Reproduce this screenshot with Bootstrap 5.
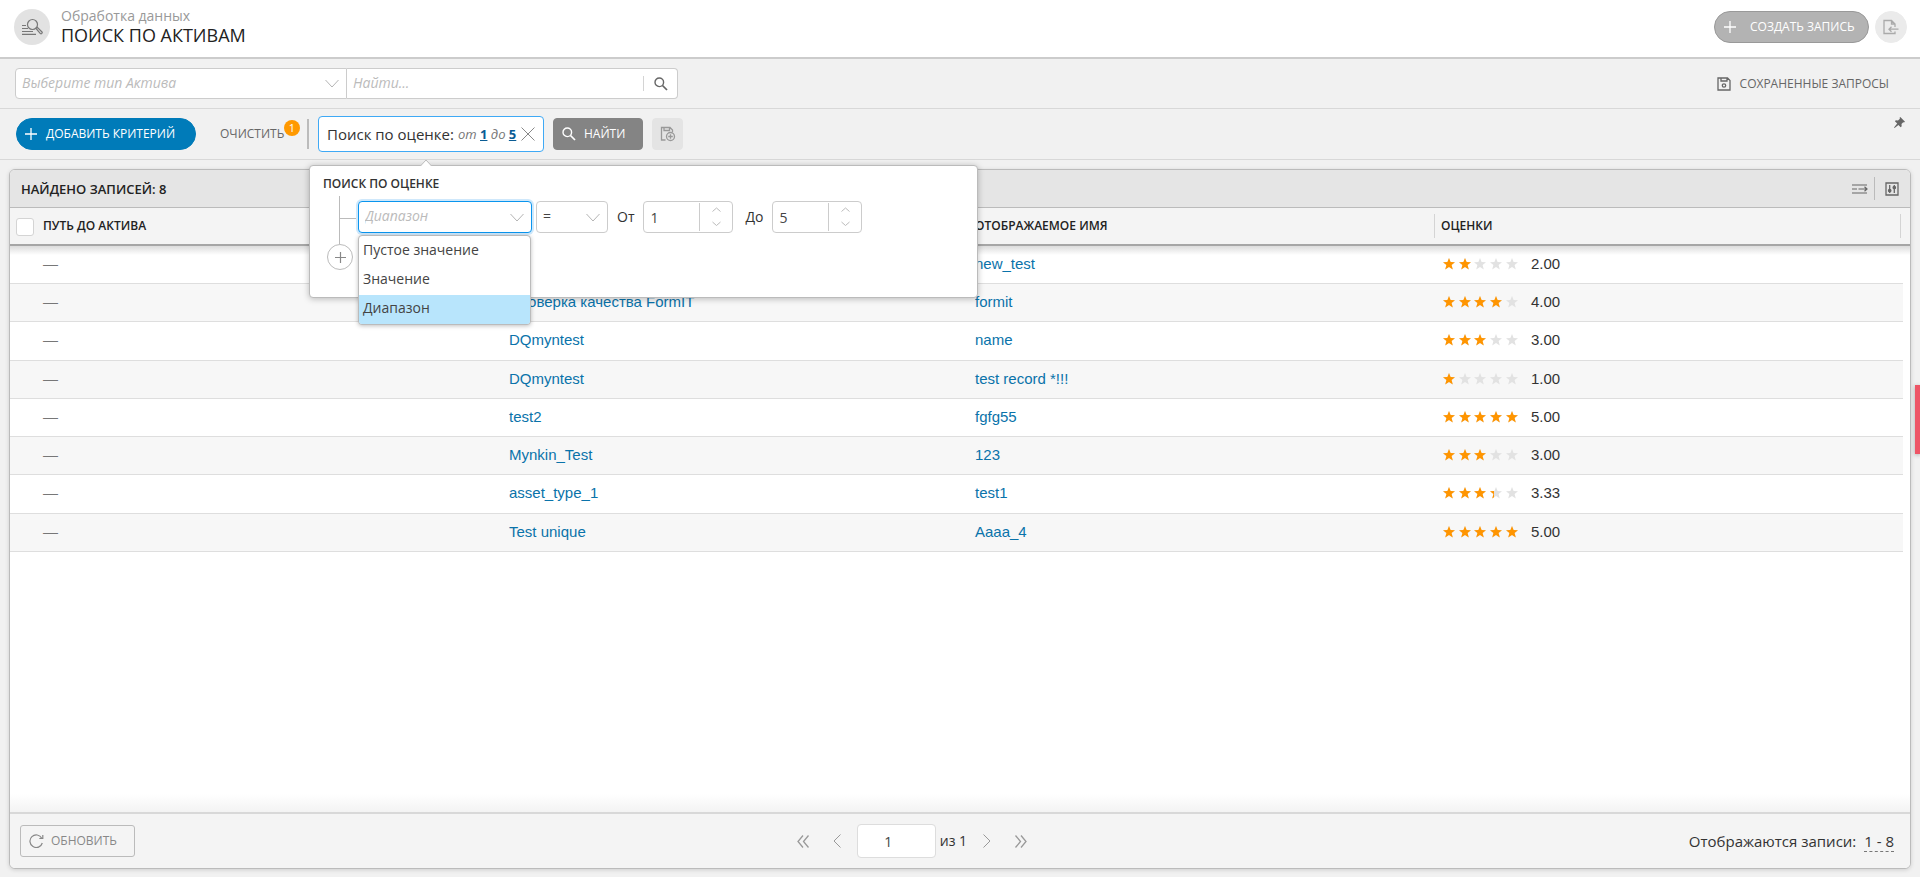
<!DOCTYPE html>
<html lang="ru">
<head>
<meta charset="utf-8">
<meta name="viewport" content="width=device-width, initial-scale=1">
<title>Поиск по активам</title>
<link href="https://cdn.jsdelivr.net/npm/bootstrap@5.3.0/dist/css/bootstrap.min.css" rel="stylesheet">
<style>
  body { font-family: "Open Sans", "Noto Sans", sans-serif; font-size: 14px; line-height: 20px; background: #f1f1f1; color: #333; }
  svg { display: block; flex: none; }
  .ico { fill: none; stroke: currentColor; }
  .btn { --bs-btn-font-size: 12px; --bs-btn-line-height: 20px; --bs-btn-padding-y: 5px; display: inline-flex; align-items: center; white-space: nowrap; }
  .form-control, .form-select { font-size: 14px; line-height: 20px; border-color: #ccc; border-radius: 4px; color: #444; min-height: 0; }
  .form-control::placeholder { color: #bbb; font-style: italic; }
  .form-select { --bs-form-select-bg-img: url("data:image/svg+xml,%3csvg xmlns='http://www.w3.org/2000/svg' viewBox='0 0 14 9'%3e%3cpath fill='none' stroke='%23b4b4b4' d='M.5 1 7 8l6.5-7'/%3e%3c/svg%3e"); background-size: 14px 9px; background-position: right 7px center; }
  .form-select.hint { color: #bbb; font-style: italic; }

  .page-head { background: #fff; border-bottom: 2px solid #ccc; height: 59px; padding: 0 13px 0 14px; }
  .page-icon { width: 36px; height: 36px; background: #e2e2e2; color: #777; margin-bottom: 3px; }
  .page-names { margin-left: 11px; padding-bottom: 5px; }
  .page-sub { color: #999; font-size: 14px; line-height: 18px; }
  .page-title { color: #222; font-size: 18px; line-height: 21px; font-weight: 500; }
  .page-acts { gap: 6px; }
  .btn-create { --bs-btn-bg: #b3b3b3; --bs-btn-border-color: #999; --bs-btn-color: #fff; --bs-btn-hover-bg: #a5a5a5; --bs-btn-hover-color: #fff; padding-left: 9px; padding-right: 0; gap: 14px; width: 155px; font-weight: 500; }
  .btn-round { width: 32px; height: 32px; padding: 0; justify-content: center; --bs-btn-bg: #ebebeb; --bs-btn-border-color: #ebebeb; --bs-btn-color: #aaa; }

  .bar-row { border-bottom: 1px solid #d8d8d8; padding: 0 15px; }
  .bar-search { height: 50px; }
  .bar-criteria { height: 51px; }
  .search-box { width: 663px; }
  .search-box .form-select { width: 332px; height: 31px; padding: 4px 28px 6px 6px; border-radius: 4px 0 0 4px; }
  .find-box { background: #fff; border: 1px solid #ccc; border-left: 0; border-radius: 0 4px 4px 0; height: 31px; }
  .find-box .form-control { border: 0; padding: 3px 6px 5px; background: none; }
  .find-box .btn { border: 0; border-left: 1px solid #d4d4d4; border-radius: 0; height: 15px; padding: 0 11px 0 10px; color: #666; width: 34px; }
  .saved { color: #666; font-size: 12px; text-decoration: none; gap: 9px; padding-right: 16px; }

  .btn-add { --bs-btn-bg: #007bb9; --bs-btn-border-color: #007bb9; --bs-btn-color: #fff; --bs-btn-hover-bg: #006da4; --bs-btn-hover-color: #fff; padding-left: 8px; padding-right: 0; gap: 9px; margin-left: 1px; width: 180px; font-weight: 500; }
  .btn-clear { color: #666; padding: 0; border: 0; margin-left: 24px; width: 66px; }
  .count { width: 16px; height: 16px; background: #f90; color: #fff; font-size: 11px; line-height: 16px; left: 64px; top: -4px; }
  .split { width: 2px; height: 30px; background: #bbb; margin: 0 9px 0 21px; }
  .chip { background: #fff; border: 1px solid #3fa9f5; border-radius: 4px; height: 36px; width: 226px; padding: 0 8px; font-size: 15px; white-space: nowrap; }
  .chip-val { color: #777; font-size: 13px; font-style: italic; margin-left: 4px; }
  .chip-val a { color: #0a5c94; font-style: normal; font-weight: 700; }
  .chip .btn { color: #888; }
  .btn-find { --bs-btn-bg: #848484; --bs-btn-border-color: #848484; --bs-btn-color: #fff; --bs-btn-hover-bg: #777; --bs-btn-hover-color: #fff; --bs-btn-border-radius: 4px; padding-left: 8px; padding-right: 0; gap: 8px; margin-left: 9px; width: 90px; font-weight: 500; }
  .btn-save { --bs-btn-bg: #e4e4e4; --bs-btn-border-color: #e4e4e4; --bs-btn-color: #999; --bs-btn-border-radius: 4px; width: 31px; height: 32px; padding: 0; justify-content: center; margin-left: 9px; }
  .btn-pin { border: 0; padding: 0; color: #666; margin: 8px 0 0; align-self: flex-start; }

  .pop { left: -9px; top: 49px; width: 669px; height: 133px; background: #fff; border: 1px solid #bbb; border-radius: 4px; box-shadow: 0 1px 6px rgba(0,0,0,.25); z-index: 5; padding: 8px 13px; }
  .pop-arrow { left: 110px; top: -7px; }
  .pop-title { font-size: 12px; line-height: 20px; color: #333; font-weight: 600; }
  .tree { width: 35px; padding: 2px 0 0 4px; }
  .tree-stem { width: 20px; height: 48px; margin-left: 12px; border-left: 1px solid #bbb; background: linear-gradient(#bbb, #bbb) 0 22px / 100% 1px no-repeat; }
  .btn-plus { width: 26px; height: 26px; padding: 0; justify-content: center; border: 1px solid #bbb; color: #888; }
  .cond { gap: 4px; margin-top: 7px; height: 32px; }
  .cond label { margin: 0 5px; }
  .cond .spin + label { margin-left: 8px; }
  .cond .form-select, .spin { height: 32px; }
  .cond .form-select { padding: 4px 28px 6px 6px; }
  .cond .sel-kind { width: 174px; border-color: #0a95ee; box-shadow: 0 0 0 2px #cfe8fb; }
  .cond .sel-op { width: 72px; }
  .spin { width: 90px; border: 1px solid #ccc; border-radius: 4px; background: #fff; padding: 1px 0; }
  .spin .form-control { border: 0; border-right: 1px solid #ccc; border-radius: 0; padding: 3px 6px; width: 56px; height: 28px; appearance: textfield; background: none; }
  .spin .form-control::-webkit-inner-spin-button { appearance: none; }
  .spin .btn { border: 0; padding: 4px 12px; color: #bbb; }
  .kinds { left: 48px; top: 69px; width: 173px; min-width: 0; padding: 1px 0 0; border: 1px solid #bbb; border-radius: 4px; box-shadow: 0 1px 4px rgba(0,0,0,.25); margin: 0; overflow: hidden; }
  .kinds .dropdown-item { font-size: 14px; line-height: 21px; padding: 2px 4px 6px; color: #444; }
  .kinds .dropdown-item.active { background: #b8e5fc; }

  .grid { margin: 9px 9px 8px; border: 1px solid #bbb; border-radius: 6px; background: #fff; box-shadow: 0 1px 4px rgba(0,0,0,.15); overflow: hidden; }
  .strong-caps { font-family: "Open Sans", sans-serif; font-weight: 600; font-size: 12px; color: #222; }
  .found { font-size: 13px; }
  .grid-head { background: #e5e5e5; border-bottom: 1px solid #bbb; height: 38px; padding: 0 11px; }
  .grid-head .btn { border: 0; padding: 0; color: #666; }
  .grid-tools { gap: 6px; }
  .grid-tools .bar { width: 1px; height: 23px; background: #bbb; margin-right: 4px; }
  .assets { table-layout: fixed; width: 100%; border-collapse: separate; border-spacing: 0; font-family: "Liberation Sans", Arial, sans-serif; font-size: 15px; line-height: 20px; }
  .assets col.c-check { width: 26px; } .assets col.c-edge { width: 3px; } .assets col.c-bar { width: 7px; }
  .assets th { height: 38px; background: #f4f4f4; border-bottom: 2px solid #a6a6a6; padding: 0 7px; }
  .assets th.sep { background: linear-gradient(#d4d4d4, #d4d4d4) 0 6px / 1px 24px no-repeat #f4f4f4; }
  .assets th.check { padding: 2px 0 0 6px; }
  .assets .form-check-input { width: 18px; height: 18px; margin: 0; border-color: #d4d4d4; border-radius: 3px; display: block; }
  .assets td { height: 38px; padding: 0 7px 2px; border-bottom: 1px solid #dedede; }
  .assets td:nth-child(2) { color: #777; }
  .assets tr:nth-child(4n+3) td { height: 39px; }
  .assets tr:nth-child(even) td { background: #f7f7f7; }
  .assets td:last-child { border: 0; background: none !important; }
  .assets tbody tr:first-child td { background: linear-gradient(#dcdcdc, #fff 9px) !important; }
  .assets a { color: #0a73aa; text-decoration: none; }
  .rate { gap: 10px; }
  .body-fade { height: 18px; background: linear-gradient(#fff, #f3f3f3); }
  .grid-foot { background: #f4f4f4; border-top: 2px solid #d8d8d8; height: 56px; padding: 0 16px 0 10px; }
  .btn-reload { --bs-btn-border-color: #bbb; --bs-btn-color: #888; --bs-btn-border-radius: 3px; padding-left: 8px; padding-right: 0; gap: 7px; width: 115px; }
  .pager .btn { border: 0; padding: 0; color: #999; }
  .pager .form-control { width: 79px; height: 34px; text-align: center; border-color: #ddd; padding: 6px 22px 6px 6px; }
  .shown { font-size: 15px; }
  .range { border-bottom: 1px dashed #777; margin-left: 4px; display: inline-block; }
  .edge-tab { right: 0; top: 385px; width: 5px; height: 69px; background: #ee5566; box-shadow: 0 1px 4px rgba(0,0,0,.3); border: 0; padding: 0; }
</style>
</head>
<body>
<svg width="0" height="0" class="position-absolute" aria-hidden="true">
  <symbol id="star" viewBox="0 0 12 12"><path fill="currentColor" d="M6 0 7.600 4.100 12 4.300 8.600 7 9.800 11.500 6 9 2.200 11.500 3.400 7 0 4.300 4.400 4.100Z"/></symbol>
  <g id="stars"><use href="#star" x="2" width="12" height="12"/><use href="#star" x="18" width="12" height="12"/><use href="#star" x="33" width="12" height="12"/><use href="#star" x="49" width="12" height="12"/><use href="#star" x="65" width="12" height="12"/></g>
  <symbol id="lens" viewBox="0 0 14 14"><g fill="none" stroke="currentColor"><circle cx="5.300" cy="5.300" r="4.300" stroke-width="1.400"/><path stroke-width="1.700" d="M8.500 8.500 13 13"/></g></symbol>
  <symbol id="plus" viewBox="0 0 12 12"><path fill="none" stroke="currentColor" stroke-width="1.300" d="M6 0v12M0 6h12"/></symbol>
</svg>

<div class="d-flex flex-column min-vh-100">
  <header class="page-head d-flex align-items-center">
    <span class="page-icon rounded-circle d-flex align-items-center justify-content-center">
      <svg class="ico" width="22" height="18" viewBox="0 0 22 18" stroke-width="1.200"><circle cx="11.500" cy="6.500" r="5"/><path d="M15 10.500l1.300-1.200 4.700 4.700c.8.900-.7 2.400-1.600 1.600ZM1 7.500h4M1 10.500h6M1 13.500h11M1 16.300h14"/></svg>
    </span>
    <div class="page-names flex-grow-1">
      <div class="page-sub">Обработка данных</div>
      <h1 class="page-title m-0">ПОИСК ПО АКТИВАМ</h1>
    </div>
    <div class="page-acts d-flex pb-1">
      <button type="button" class="btn btn-create rounded-pill"><svg width="12" height="12"><use href="#plus"/></svg>СОЗДАТЬ ЗАПИСЬ</button>
      <button type="button" class="btn btn-round rounded-circle" aria-label="Экспорт">
        <svg class="ico" width="16" height="16" viewBox="0 0 16 16" stroke-width="1.300"><path d="M12 12.500v2H1V1.500h7.500L12 5v3M8.500 1.500V5H12M15.500 10.200H6M8.500 7.700 6 10.200l2.500 2.500"/></svg>
      </button>
    </div>
  </header>

  <div class="bar-row bar-search d-flex align-items-center justify-content-between">
    <form class="search-box d-flex">
      <select class="form-select hint flex-shrink-0" aria-label="Тип Актива"><option>Выберите тип Актива</option></select>
      <div class="find-box d-flex align-items-center flex-grow-1">
        <input type="text" class="form-control" placeholder="Найти..." aria-label="Найти">
        <button type="button" class="btn" aria-label="Искать"><svg width="14" height="14"><use href="#lens"/></svg></button>
      </div>
    </form>
    <a href="#" class="saved d-flex align-items-center">
      <svg class="ico" width="14" height="14" viewBox="0 0 14 14" stroke-width="1.300"><path d="M1 1h9.500L13 3.500V13H1ZM4 1v3h6V1"/><circle cx="7" cy="8.500" r="1.700"/></svg>СОХРАНЕННЫЕ ЗАПРОСЫ
    </a>
  </div>

  <div class="bar-row bar-criteria d-flex align-items-center">
    <button type="button" class="btn btn-add rounded-pill"><svg width="12" height="12"><use href="#plus"/></svg>ДОБАВИТЬ КРИТЕРИЙ</button>
    <button type="button" class="btn btn-clear position-relative">ОЧИСТИТЬ<span class="count rounded-circle position-absolute text-center">1</span></button>
    <span class="split"></span>
    <div class="position-relative">
      <div class="chip d-flex align-items-center">
        <span>Поиск по оценке:</span>
        <span class="chip-val flex-grow-1">от <a href="#">1</a> до <a href="#">5</a></span>
        <button type="button" class="btn border-0 p-0" aria-label="Удалить критерий"><svg class="ico" width="14" height="14" viewBox="0 0 14 14"><path d="M.5.5l13 13M13.500.5l-13 13"/></svg></button>
      </div>
      <div class="pop position-absolute">
        <svg class="pop-arrow position-absolute" width="12" height="7" viewBox="0 0 12 7"><path fill="#fff" stroke="#bbb" d="M0 7.500 6 1l6 6.500"/></svg>
        <div class="pop-title">ПОИСК ПО ОЦЕНКЕ</div>
        <div class="d-flex">
          <div class="tree">
            <div class="tree-stem"></div>
            <button type="button" class="btn btn-plus rounded-circle" aria-label="Добавить условие"><svg class="ico" width="11" height="11"><use href="#plus"/></svg></button>
          </div>
          <div class="cond d-flex align-items-center">
            <select class="form-select hint sel-kind" aria-label="Вид условия"><option>Диапазон</option></select>
            <select class="form-select sel-op" aria-label="Оператор"><option>=</option></select>
            <label for="from">От</label>
            <div class="spin d-flex">
              <input id="from" type="number" class="form-control" value="1">
              <div class="d-flex flex-column justify-content-between">
                <button type="button" class="btn" aria-label="Больше"><svg class="ico" width="9" height="6" viewBox="0 0 9 6"><path d="M.5 4.500l4-3.500 4 3.500"/></svg></button>
                <button type="button" class="btn" aria-label="Меньше"><svg class="ico" width="9" height="6" viewBox="0 0 9 6"><path d="M.5 1l4 3.500 4-3.500"/></svg></button>
              </div>
            </div>
            <label for="to">До</label>
            <div class="spin d-flex">
              <input id="to" type="number" class="form-control" value="5">
              <div class="d-flex flex-column justify-content-between">
                <button type="button" class="btn" aria-label="Больше"><svg class="ico" width="9" height="6" viewBox="0 0 9 6"><path d="M.5 4.500l4-3.500 4 3.500"/></svg></button>
                <button type="button" class="btn" aria-label="Меньше"><svg class="ico" width="9" height="6" viewBox="0 0 9 6"><path d="M.5 1l4 3.500 4-3.500"/></svg></button>
              </div>
            </div>
          </div>
        </div>
        <div class="kinds dropdown-menu show">
          <button type="button" class="dropdown-item">Пустое значение</button>
          <button type="button" class="dropdown-item">Значение</button>
          <button type="button" class="dropdown-item active">Диапазон</button>
        </div>
      </div>
    </div>
    <button type="button" class="btn btn-find"><svg width="14" height="14"><use href="#lens"/></svg>НАЙТИ</button>
    <button type="button" class="btn btn-save" aria-label="Сохранить запрос">
      <svg class="ico" width="16" height="16" viewBox="0 0 16 16" stroke-width="1.300"><path d="M5.500 14H1.500V1.500h8.500L12.500 4v2M4 1.500v3h5.500v-3"/><circle cx="10.500" cy="10.500" r="4"/><path d="M10.500 8.200v4.600M8.200 10.500h4.600"/></svg>
    </button>
    <button type="button" class="btn btn-pin ms-auto" aria-label="Закрепить панель"><svg width="11" height="11" viewBox="0 0 11 11"><path fill="currentColor" d="M6.300 0 11 4.700l-1 .7-.8-.2-1.700 1.900.2 2.200-1 .9-2.300-2.300L.6 11 0 10.400l3.200-3.900L.9 4.300l.9-1 2.200.2L5.900 1.700 5.600.8Z"/></svg></button>
  </div>

  <main class="grid d-flex flex-column flex-grow-1">
    <div class="grid-head d-flex align-items-center justify-content-between">
      <div class="strong-caps found">НАЙДЕНО ЗАПИСЕЙ: 8</div>
      <div class="grid-tools d-flex align-items-center">
        <button type="button" class="btn" aria-label="Перенос строк"><svg class="ico" width="16" height="10" viewBox="0 0 16 10" stroke-width="1.200"><path d="M0 1h15M0 9h15M0 5h5M6.500 5H15M12.500 2.800 15 5l-2.500 2.200"/></svg></button>
        <span class="bar"></span>
        <button type="button" class="btn" aria-label="Настройка колонок"><svg class="ico" width="14" height="14" viewBox="0 0 14 14" stroke-width="1.300"><path d="M1 1h12v12H1ZM4.700 3v8M9.300 3v8"/><circle cx="4.700" cy="8.500" r="1.200" fill="currentColor"/><circle cx="9.300" cy="5.500" r="1.200" fill="currentColor"/></svg></button>
      </div>
    </div>
    <table class="assets">
      <colgroup><col class="c-check"><col><col><col><col><col class="c-edge"><col class="c-bar"></colgroup>
      <thead>
        <tr>
          <th class="check"><input type="checkbox" class="form-check-input" aria-label="Выбрать все"></th>
          <th class="strong-caps">ПУТЬ ДО АКТИВА</th>
          <th class="strong-caps sep"></th>
          <th class="strong-caps sep">ОТОБРАЖАЕМОЕ ИМЯ</th>
          <th class="strong-caps sep">ОЦЕНКИ</th>
          <th class="sep" colspan="2"></th>
        </tr>
      </thead>
      <tbody>
        <tr><td></td><td>—</td><td></td><td><a href="#">new_test</a></td><td><div class="rate d-flex align-items-center"><svg width="80" height="12"><use href="#stars" color="#e2e2e2"/><svg width="32" height="12"><use href="#stars" color="#ff9500"/></svg></svg>2.00</div></td><td></td><td></td></tr>
        <tr><td></td><td>—</td><td><a href="#">Проверка качества FormIT</a></td><td><a href="#">formit</a></td><td><div class="rate d-flex align-items-center"><svg width="80" height="12"><use href="#stars" color="#e2e2e2"/><svg width="64" height="12"><use href="#stars" color="#ff9500"/></svg></svg>4.00</div></td><td></td><td></td></tr>
        <tr><td></td><td>—</td><td><a href="#">DQmyntest</a></td><td><a href="#">name</a></td><td><div class="rate d-flex align-items-center"><svg width="80" height="12"><use href="#stars" color="#e2e2e2"/><svg width="48" height="12"><use href="#stars" color="#ff9500"/></svg></svg>3.00</div></td><td></td><td></td></tr>
        <tr><td></td><td>—</td><td><a href="#">DQmyntest</a></td><td><a href="#">test record *!!!</a></td><td><div class="rate d-flex align-items-center"><svg width="80" height="12"><use href="#stars" color="#e2e2e2"/><svg width="16" height="12"><use href="#stars" color="#ff9500"/></svg></svg>1.00</div></td><td></td><td></td></tr>
        <tr><td></td><td>—</td><td><a href="#">test2</a></td><td><a href="#">fgfg55</a></td><td><div class="rate d-flex align-items-center"><svg width="80" height="12"><use href="#stars" color="#e2e2e2"/><svg width="80" height="12"><use href="#stars" color="#ff9500"/></svg></svg>5.00</div></td><td></td><td></td></tr>
        <tr><td></td><td>—</td><td><a href="#">Mynkin_Test</a></td><td><a href="#">123</a></td><td><div class="rate d-flex align-items-center"><svg width="80" height="12"><use href="#stars" color="#e2e2e2"/><svg width="48" height="12"><use href="#stars" color="#ff9500"/></svg></svg>3.00</div></td><td></td><td></td></tr>
        <tr><td></td><td>—</td><td><a href="#">asset_type_1</a></td><td><a href="#">test1</a></td><td><div class="rate d-flex align-items-center"><svg width="80" height="12"><use href="#stars" color="#e2e2e2"/><svg width="53" height="12"><use href="#stars" color="#ff9500"/></svg></svg>3.33</div></td><td></td><td></td></tr>
        <tr><td></td><td>—</td><td><a href="#">Test unique</a></td><td><a href="#">Aaaa_4</a></td><td><div class="rate d-flex align-items-center"><svg width="80" height="12"><use href="#stars" color="#e2e2e2"/><svg width="80" height="12"><use href="#stars" color="#ff9500"/></svg></svg>5.00</div></td><td></td><td></td></tr>
      </tbody>
    </table>
    <div class="body-fade mt-auto"></div>
    <footer class="grid-foot d-flex align-items-center justify-content-between">
      <button type="button" class="btn btn-reload"><svg class="ico" width="15" height="14" viewBox="0 0 15 14" stroke-width="1.200"><path d="M12.800 4.200A6.300 6.300 0 1 0 13.300 9M13.800 1v3.500h-3.500"/></svg>ОБНОВИТЬ</button>
      <div class="pager d-flex align-items-center">
        <button type="button" class="btn" aria-label="Первая"><svg class="ico" width="12" height="13" viewBox="0 0 12 13" stroke-width="1.300"><path d="M6 .5l-5 6 5 6M11.500.5l-5 6 5 6"/></svg></button>
        <button type="button" class="btn ms-4" aria-label="Назад"><svg class="ico" width="8" height="14" viewBox="0 0 8 14"><path d="M7.500.5l-6.500 6.500 6.500 6.500"/></svg></button>
        <input type="text" class="form-control ms-3" value="1" aria-label="Страница">
        <span class="ms-1">из 1</span>
        <button type="button" class="btn ms-3" aria-label="Вперёд"><svg class="ico" width="8" height="14" viewBox="0 0 8 14"><path d="M.5.5l6.500 6.500-6.500 6.500"/></svg></button>
        <button type="button" class="btn ms-4" aria-label="Последняя"><svg class="ico" width="12" height="13" viewBox="0 0 12 13" stroke-width="1.300"><path d="M.5.5l5 6-5 6M6 .5l5 6-5 6"/></svg></button>
      </div>
      <div class="shown">Отображаются записи: <span class="range">1 - 8</span></div>
    </footer>
  </main>
</div>
<button type="button" class="edge-tab position-fixed" aria-label="Обратная связь"></button>
<script src="https://cdn.jsdelivr.net/npm/bootstrap@5.3.0/dist/js/bootstrap.bundle.min.js"></script>
</body>
</html>
